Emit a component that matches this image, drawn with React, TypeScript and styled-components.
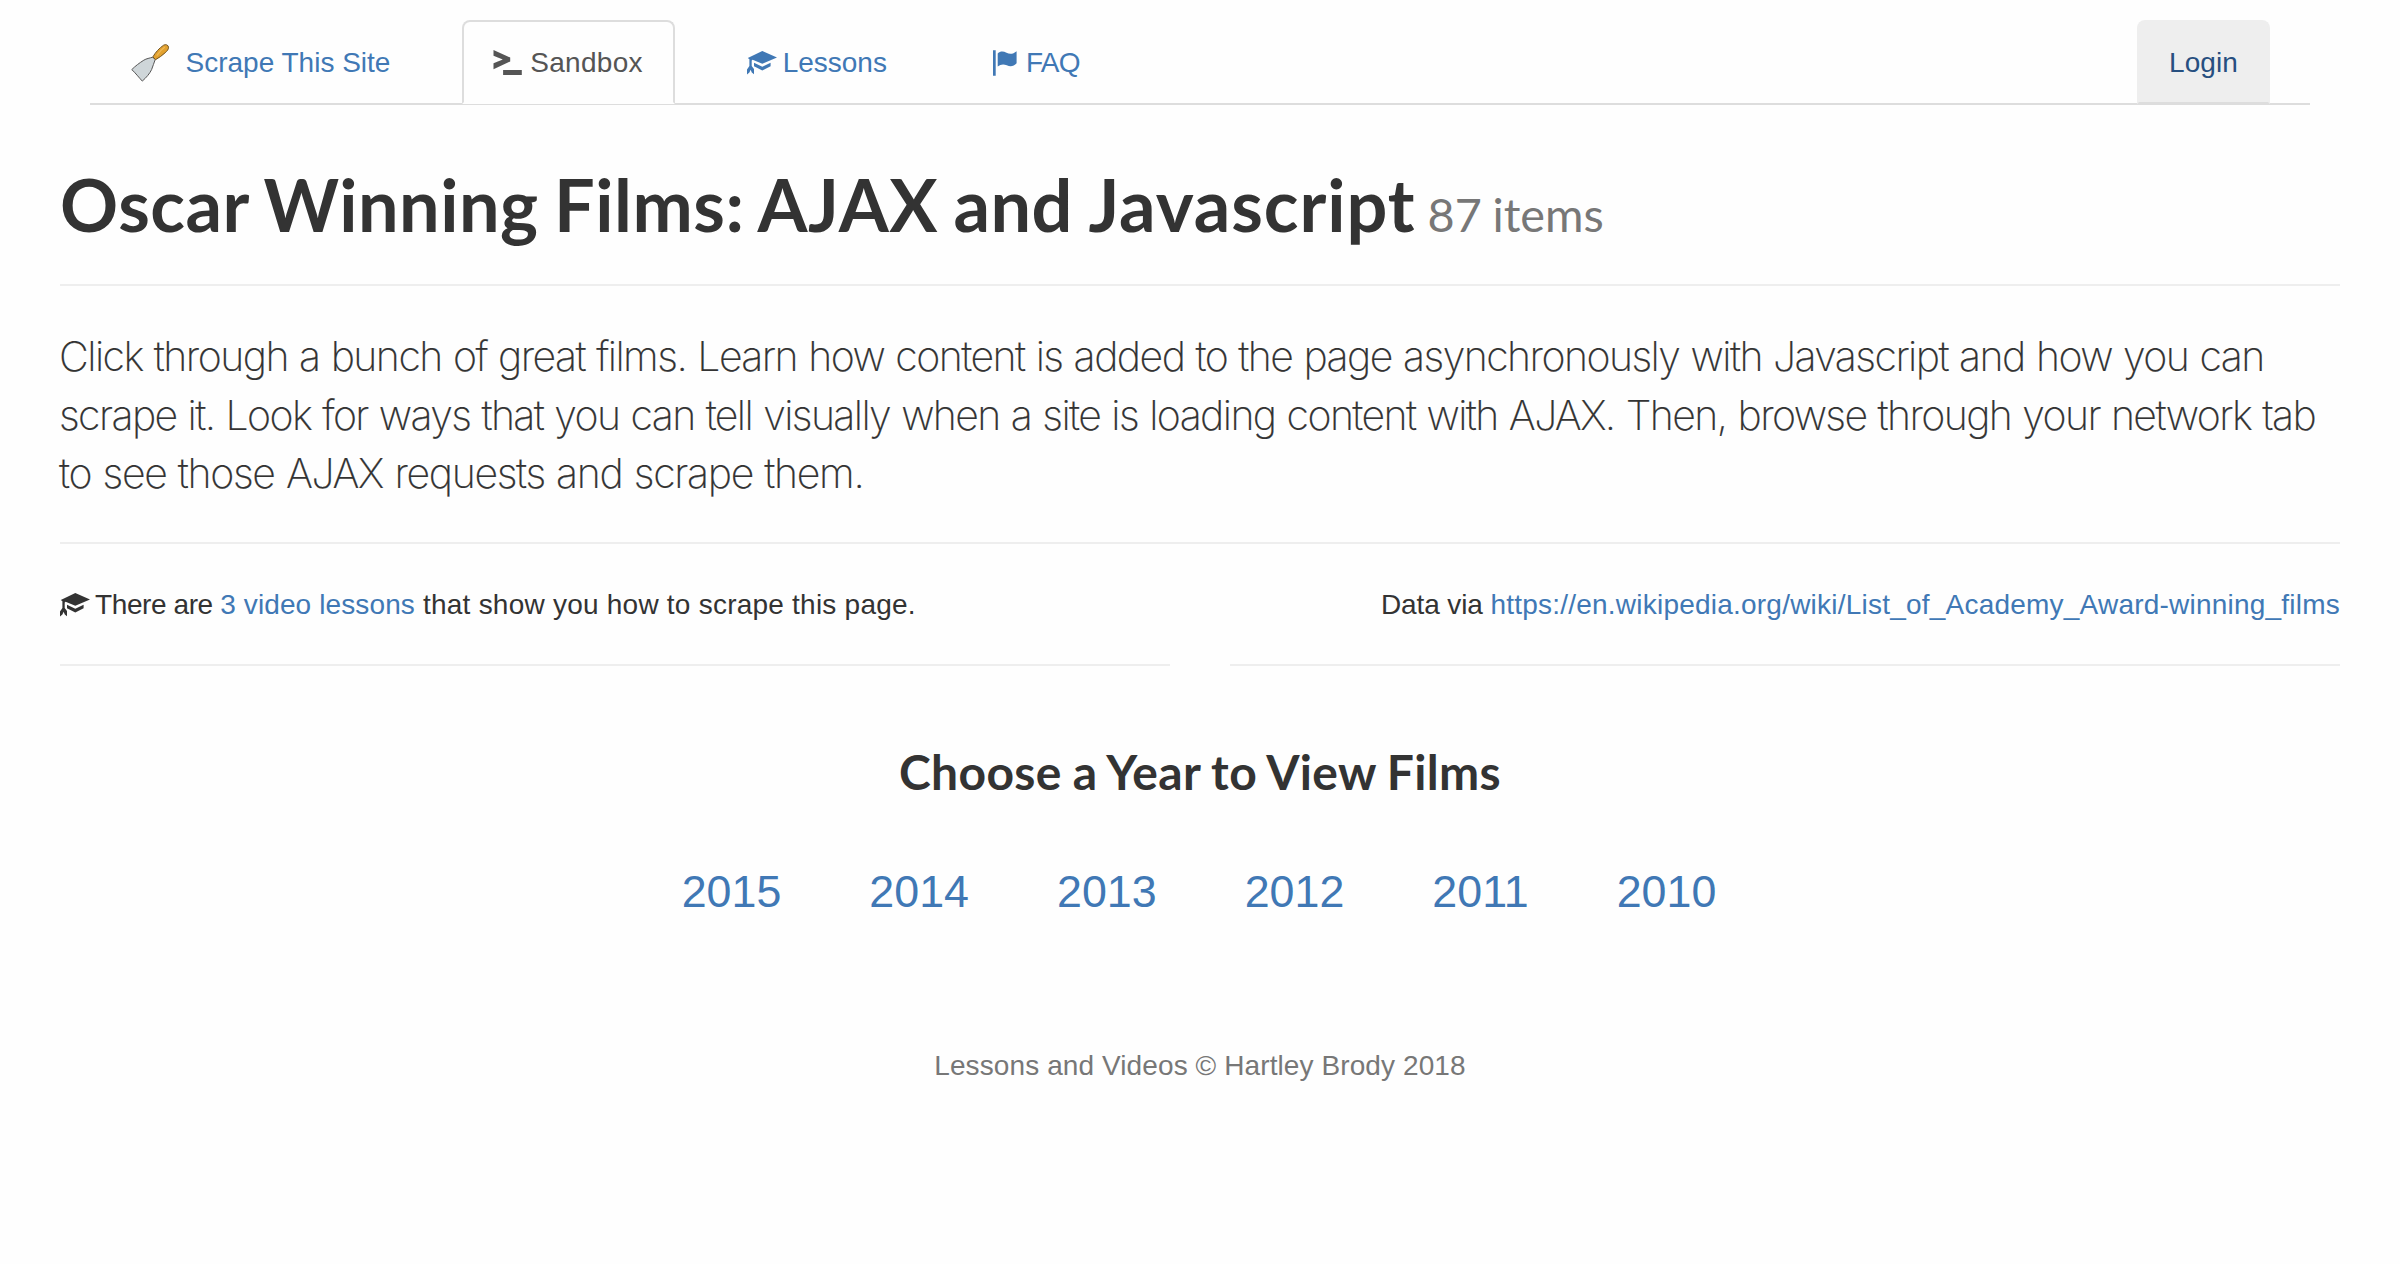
import React from "react";
import styled, { createGlobalStyle } from "styled-components";

const GlobalStyle = createGlobalStyle`
  *, *::before, *::after { box-sizing: border-box; }
  body {
    margin: 0;
    background: #fefefe;
    color: #333;
    font-family: "Liberation Sans", Arial, sans-serif;
    font-size: 28px;
    line-height: 40px;
  }
`;

const Page = styled.div`
  padding: 20px 60px 0;
  min-height: 1264px;
`;

const Nav = styled.nav`
  display: flex;
  gap: 40px;
  height: 85px;
  margin: 0 30px;
  padding-left: 8.5px;
  border-bottom: 2px solid #ddd;
`;

const Tab = styled.a<{ $state?: "active" | "hover"; $spacing?: number }>`
  display: flex;
  align-items: center;
  height: 84px;
  padding: 1px 30px 0;
  border: 2px solid transparent;
  border-radius: 8px 8px 0 0;
  color: #4078b5;
  text-decoration: none;
  white-space: nowrap;
  letter-spacing: ${(p) => p.$spacing ?? 0}px;
  ${(p) =>
    p.$state === "active" &&
    `color: #555; background: #fefefe; border-color: #ddd; border-bottom-color: #fefefe;`}
  ${(p) =>
    p.$state === "hover" &&
    `color: #274f80; background: #eee; border-color: #eee; border-bottom-color: #ddd; margin-left: auto; margin-right: 40px;`}
`;

const IconBox = styled.span<{ $gap?: number; $width?: number }>`
  display: inline-block;
  flex: none;
  width: ${(p) => p.$width ?? 28}px;
  margin-right: ${(p) => p.$gap ?? 7.8}px;
  svg {
    display: block;
    overflow: visible;
  }
`;

const Title = styled.h1`
  margin: 59.5px 0 40px;
  font: 700 72px/79.2px Lato, sans-serif;
  letter-spacing: 0.5px;
  word-spacing: -2.5px;
`;

const Count = styled.small`
  margin-left: -3.5px;
  font-size: 46.8px;
  font-weight: 400;
  line-height: 1;
  color: #777;
  letter-spacing: 0;
  word-spacing: -1.4px;
`;

const Rule = styled.hr`
  height: 2px;
  margin: 0;
  border: 0;
  background: #eee;
`;

const Lead = styled.p`
  margin: 41px 0 38.6px -1px;
  font: 200 41px/58.8px Inter, sans-serif;
  word-spacing: 1.1px;
  -webkit-text-stroke: 0.2px #333;
`;

const LeadLine = styled.span<{ $spacing: number }>`
  display: block;
  white-space: nowrap;
  letter-spacing: ${(p) => p.$spacing}px;
`;

const Columns = styled.div`
  display: grid;
  grid-template-columns: 1fr 1fr;
  gap: 60px;
`;

const Note = styled.p<{ $end?: boolean }>`
  display: flex;
  align-items: center;
  justify-content: ${(p) => (p.$end ? "flex-end" : "flex-start")};
  margin: 41px 0 39px;
  height: 40px;
  white-space: pre;
`;

const Run = styled.span<{ $spacing: number }>`
  letter-spacing: ${(p) => p.$spacing}px;
`;

const Link = styled.a<{ $spacing?: number }>`
  color: #4078b5;
  text-decoration: none;
  letter-spacing: ${(p) => p.$spacing ?? 0}px;
`;

const Subtitle = styled.h3`
  margin: 80px 0 61px;
  font: 700 48px/52.8px Lato, sans-serif;
  letter-spacing: 0.34px;
  word-spacing: -1.1px;
  text-align: center;
`;

const Years = styled.div`
  display: flex;
  justify-content: center;
  gap: 88px;
  margin-right: 2px;
  font-size: 44.8px;
  line-height: 64px;
`;

const Footer = styled.footer`
  margin-top: 123px;
  color: #777;
  text-align: center;
  letter-spacing: 0.1px;
`;

const ScraperIcon = () => (
  <svg width="38" height="38" viewBox="0 0 38 38">
    <path
      d="M21.8 13.2C18.5 14.2 15.5 14.5 12.8 16.2C8.6 18.8 4 22.3 0.8 25.6C4.3 28.8 7.8 33.4 11.3 37.1C15.2 33.6 18.6 29.8 20.6 25.6C22.2 22.2 22.6 19 24.2 15.6Z"
      fill="#cfd6d9"
      stroke="#555"
      strokeWidth="1"
    />
    <path
      d="M21.9 12.9C24.2 8.6 28.4 4 32.6 1.2C34.7 -0.1 37.3 1 37.5 3.2C37.7 5.4 36 7.1 34.2 8.7C31.3 11.4 28 13.8 24.5 15.7Z"
      fill="#e2a12f"
      stroke="#73541f"
      strokeWidth="1"
    />
    <path d="M25.8 11.7C28 8.4 30.7 5.4 33.9 3.1" fill="none" stroke="#efb957" strokeWidth="1.2" />
  </svg>
);

const ConsoleIcon = () => (
  <svg width="28" height="25" viewBox="0 0 28 25">
    <path d="M-0.5 0L16.2 7.5V11.5L-0.5 19.2V13.2L8.8 9.5L-0.5 5.8ZM9.1 20H27.8V25H9.1Z" fill="currentColor" />
  </svg>
);

const LessonsIcon = () => (
  <svg width="30" height="24" viewBox="0 0 30 24">
    <path
      d="M15.3 0L30 6.5L15.3 12.8L5.6 8.7L4.7 9.6V15L7 18V23.3L4.8 21.6L3.6 18.8L2.4 21.6L0 23.6V18.5L2.4 15V8.2L0.8 7Z"
      fill="currentColor"
    />
    <path d="M7 11.8L15.3 15.8L23.6 11.8V15.2L15.3 19.4L7 15.2Z" fill="currentColor" />
  </svg>
);

const FlagIcon = () => (
  <svg width="28" height="26" viewBox="0 0 28 26">
    <path
      d="M2 0.3H4.7V25.7H2ZM6.7 3.4C9.4 1 12.4 1.2 15.5 2.8C19.3 4.6 22.4 3.8 25.6 1.2V13.2C22.8 16.6 19.1 16.9 15.8 15.3C12.6 13.8 9.6 14.2 6.7 16.4Z"
      fill="currentColor"
    />
  </svg>
);

const years = [2015, 2014, 2013, 2012, 2011, 2010];

export default function App() {
  return (
    <Page>
      <GlobalStyle />
      <Nav>
        <Tab>
          <IconBox $width={38} $gap={17}>
            <ScraperIcon />
          </IconBox>
          Scrape This Site
        </Tab>
        <Tab $state="active" $spacing={0.3}>
          <IconBox>
            <ConsoleIcon />
          </IconBox>
          Sandbox
        </Tab>
        <Tab>
          <IconBox>
            <LessonsIcon />
          </IconBox>
          Lessons
        </Tab>
        <Tab $spacing={-0.7}>
          <IconBox $gap={7}>
            <FlagIcon />
          </IconBox>
          FAQ
        </Tab>
        <Tab $state="hover" $spacing={0.1}>
          Login
        </Tab>
      </Nav>
      <Title>
        Oscar Winning Films: AJAX and <Run $spacing={0.95}>Javascript</Run> <Count>87 items</Count>
      </Title>
      <Rule />
      <Lead>
        <LeadLine $spacing={-1.53}>
          Click through a bunch of great films. Learn how content is added to the page asynchronously with Javascript and how you can
        </LeadLine>
        <LeadLine $spacing={-1.58}>
          scrape it. Look for ways that you can tell visually when a site is loading content with AJAX. Then, browse through your network tab
        </LeadLine>
        <LeadLine $spacing={-1.31}>to see those AJAX requests and scrape them.</LeadLine>
      </Lead>
      <Rule />
      <Columns>
        <div>
          <Note>
            <IconBox $gap={7}>
              <LessonsIcon />
            </IconBox>
            <Run $spacing={-0.4}>There are </Run>
            <Link $spacing={0.12}>3 video lessons</Link>
            <Run $spacing={0.23}> that show you how to scrape this page.</Run>
          </Note>
          <Rule />
        </div>
        <div>
          <Note $end>
            <Run $spacing={-0.1}>Data via </Run>
            <Link $spacing={0.22}>https://en.wikipedia.org/wiki/List_of_Academy_Award-winning_films</Link>
          </Note>
          <Rule />
        </div>
      </Columns>
      <Subtitle>Choose a Year to View Films</Subtitle>
      <Years>
        {years.map((year) => (
          <Link key={year}>{year}</Link>
        ))}
      </Years>
      <Footer>Lessons and Videos © Hartley Brody 2018</Footer>
    </Page>
  );
}
